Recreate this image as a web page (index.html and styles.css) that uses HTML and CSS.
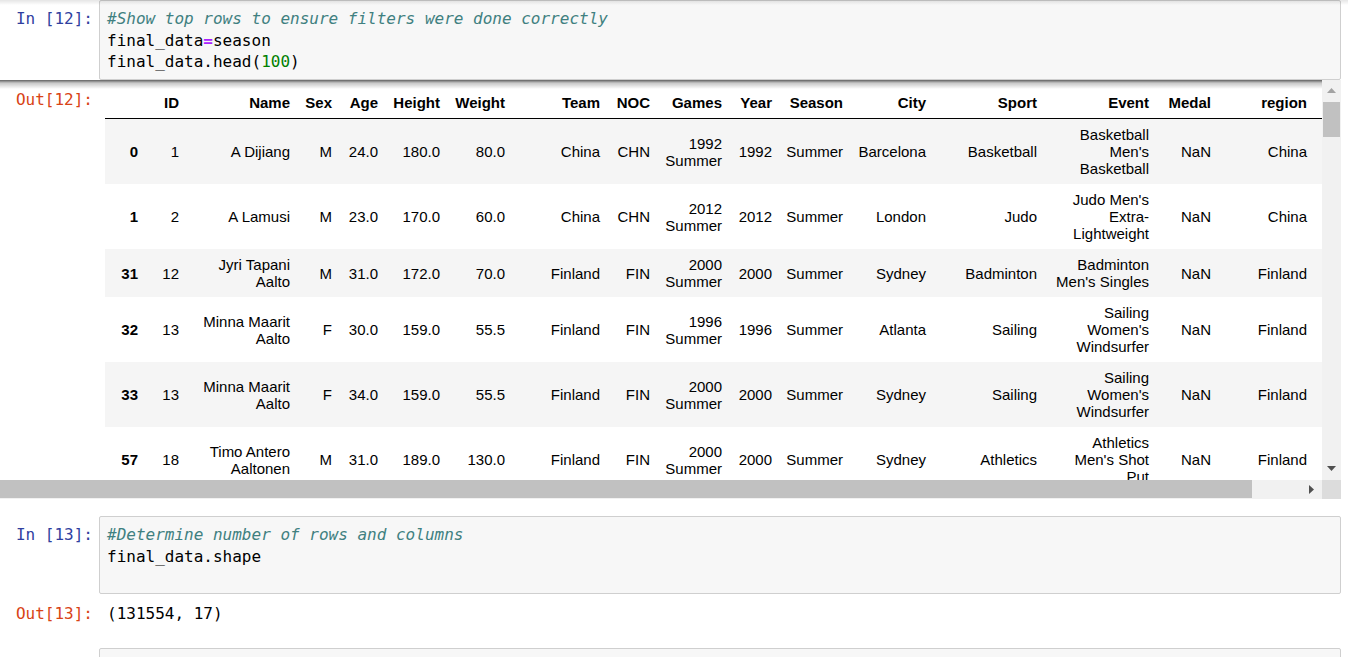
FILE: index.html
```html
<!DOCTYPE html>
<html>
<head>
<meta charset="utf-8">
<link rel="stylesheet" href="styles.css">
</head>
<body>
<div class="top-shade"></div>
<div class="notebook">
  <div class="cell">
    <div class="prompt in">In&nbsp;[12]:</div>
    <div class="input-box"><div class="ln"><span class="c">#Show top rows to ensure filters were done correctly</span></div><div class="ln">final_data<span class="o">=</span>season</div><div class="ln">final_data.head(<span class="m">100</span>)</div></div>
  </div>

  <div class="out-scroll">
    <div class="viewport">
      <div class="out-row">
        <div class="prompt out">Out[12]:</div>
        <div class="table-wrap">
          <table class="df">
            <colgroup>
              <col class="w40"><col class="w41"><col class="w111"><col class="w42"><col class="w46"><col class="w62"><col class="w65"><col class="w95"><col class="w50"><col class="w72"><col class="w50"><col class="w71"><col class="w83"><col class="w111"><col class="w112"><col class="w62"><col class="w96"><col class="w62">
            </colgroup>
            <thead>
              <tr><th></th><th>ID</th><th>Name</th><th>Sex</th><th>Age</th><th>Height</th><th>Weight</th><th>Team</th><th>NOC</th><th>Games</th><th>Year</th><th>Season</th><th>City</th><th>Sport</th><th>Event</th><th>Medal</th><th>region</th><th></th></tr>
            </thead>
            <tbody>
              <tr><th>0</th><td>1</td><td>A Dijiang</td><td>M</td><td>24.0</td><td>180.0</td><td>80.0</td><td>China</td><td>CHN</td><td>1992<br>Summer</td><td>1992</td><td>Summer</td><td>Barcelona</td><td>Basketball</td><td>Basketball<br>Men's<br>Basketball</td><td>NaN</td><td>China</td><td></td></tr>
              <tr><th>1</th><td>2</td><td>A Lamusi</td><td>M</td><td>23.0</td><td>170.0</td><td>60.0</td><td>China</td><td>CHN</td><td>2012<br>Summer</td><td>2012</td><td>Summer</td><td>London</td><td>Judo</td><td>Judo Men's<br>Extra-<br>Lightweight</td><td>NaN</td><td>China</td><td></td></tr>
              <tr><th>31</th><td>12</td><td>Jyri Tapani<br>Aalto</td><td>M</td><td>31.0</td><td>172.0</td><td>70.0</td><td>Finland</td><td>FIN</td><td>2000<br>Summer</td><td>2000</td><td>Summer</td><td>Sydney</td><td>Badminton</td><td>Badminton<br>Men's Singles</td><td>NaN</td><td>Finland</td><td></td></tr>
              <tr><th>32</th><td>13</td><td>Minna Maarit<br>Aalto</td><td>F</td><td>30.0</td><td>159.0</td><td>55.5</td><td>Finland</td><td>FIN</td><td>1996<br>Summer</td><td>1996</td><td>Summer</td><td>Atlanta</td><td>Sailing</td><td>Sailing<br>Women's<br>Windsurfer</td><td>NaN</td><td>Finland</td><td></td></tr>
              <tr><th>33</th><td>13</td><td>Minna Maarit<br>Aalto</td><td>F</td><td>34.0</td><td>159.0</td><td>55.5</td><td>Finland</td><td>FIN</td><td>2000<br>Summer</td><td>2000</td><td>Summer</td><td>Sydney</td><td>Sailing</td><td>Sailing<br>Women's<br>Windsurfer</td><td>NaN</td><td>Finland</td><td></td></tr>
              <tr><th>57</th><td>18</td><td>Timo Antero<br>Aaltonen</td><td>M</td><td>31.0</td><td>189.0</td><td>130.0</td><td>Finland</td><td>FIN</td><td>2000<br>Summer</td><td>2000</td><td>Summer</td><td>Sydney</td><td>Athletics</td><td>Athletics<br>Men's Shot<br>Put</td><td>NaN</td><td>Finland</td><td></td></tr>
            </tbody>
          </table>
        </div>
      </div>
    </div>
    <div class="vscroll">
      <div class="sb-btn"><svg width="9" height="5" viewBox="0 0 9 5"><polygon points="0,5 4.5,0 9,5" fill="#a3a3a3"/></svg></div>
      <div class="vthumb"></div>
      <div class="spacer"></div>
      <div class="sb-btn down"><svg width="9" height="5" viewBox="0 0 9 5"><polygon points="0,0 4.5,5 9,0" fill="#505050"/></svg></div>
    </div>
    <div class="hscroll">
      <div class="hthumb"></div>
      <div class="spacer"></div>
      <div class="sb-btn right"><svg width="5" height="9" viewBox="0 0 5 9"><polygon points="0,0 5,4.5 0,9" fill="#505050"/></svg></div>
    </div>
    <div class="corner"></div>
  </div>

  <div class="cell cell2">
    <div class="prompt in">In&nbsp;[13]:</div>
    <div class="input-box"><div class="ln"><span class="c">#Determine number of rows and columns</span></div><div class="ln">final_data.shape</div></div>
  </div>

  <div class="out-simple">
    <div class="prompt out">Out[13]:</div>
    <div class="out-text">(131554, 17)</div>
  </div>

  <div class="cell cell3">
    <div class="prompt in"></div>
    <div class="input-box"></div>
  </div>
</div>
</body>
</html>
```

FILE: styles.css
```css
html, body {
  margin: 0;
  padding: 0;
  background: #fff;
  overflow: hidden;
}

.top-shade {
  position: absolute;
  top: 0;
  left: 0;
  width: 1348px;
  height: 5px;
  background: linear-gradient(rgba(0, 0, 0, 0.1), rgba(0, 0, 0, 0));
  z-index: 5;
}

.notebook {
  width: 1341px;
}

.cell {
  display: flex;
}

.prompt {
  flex: none;
  width: 99px;
  box-sizing: border-box;
  padding-right: 6px;
  padding-top: 8px;
  text-align: right;
  font-family: "DejaVu Sans Mono", monospace;
  font-size: 16px;
  line-height: 21.5px;
  white-space: nowrap;
}

.prompt.in { color: #303f9f; }
.prompt.out { color: #d84315; }

.input-box {
  flex: 1;
  box-sizing: border-box;
  border: 1px solid #cfcfcf;
  border-radius: 2px;
  background: #f7f7f7;
  padding: 7px 7px 6px 7px;
  min-height: 80px;
  font-family: "DejaVu Sans Mono", monospace;
  font-size: 16px;
  line-height: 21.5px;
  color: #000;
}

.ln {
  white-space: pre;
  height: 21.5px;
}

.c { color: #408080; font-style: italic; }
.o { color: #aa22ff; font-weight: bold; }
.m { color: #008000; }

/* output scroll area */
.out-scroll {
  display: grid;
  grid-template-columns: 1322px 19px;
  grid-template-rows: 400px 19px;
}

.viewport {
  position: relative;
  overflow: hidden;
}

.viewport::after {
  content: "";
  position: absolute;
  top: 0;
  left: 0;
  right: 0;
  height: 9px;
  background: linear-gradient(rgba(0, 0, 0, 0.62), rgba(0, 0, 0, 0.22) 3px, rgba(0, 0, 0, 0));
}

.out-row {
  display: flex;
  padding-top: 7px;
  width: max-content;
}

.out-row .prompt {
  padding-top: 2px;
}

.table-wrap {
  padding-left: 6px;
}

.df {
  border-collapse: collapse;
  table-layout: fixed;
  width: 1271px;
  font-family: "Liberation Sans", Arial, sans-serif;
  font-size: 15px;
  line-height: 17px;
  color: #000;
}

.df th, .df td {
  padding: 7px;
  text-align: right;
  vertical-align: middle;
  white-space: nowrap;
  overflow: hidden;
}

.df thead th {
  border-bottom: 1px solid #000;
  font-weight: bold;
}

.df tbody th { font-weight: bold; }

.df tbody tr:nth-child(odd) { background: #f5f5f5; }

.w40 { width: 40px; }
.w41 { width: 41px; }
.w42 { width: 42px; }
.w46 { width: 46px; }
.w50 { width: 50px; }
.w62 { width: 62px; }
.w65 { width: 65px; }
.w71 { width: 71px; }
.w72 { width: 72px; }
.w83 { width: 83px; }
.w95 { width: 95px; }
.w96 { width: 96px; }
.w111 { width: 111px; }
.w112 { width: 112px; }

/* scrollbars */
.vscroll {
  background: #f1f1f1;
  display: flex;
  flex-direction: column;
}

.sb-btn {
  height: 20px;
  flex: none;
  display: flex;
  align-items: center;
  justify-content: center;
}

.sb-btn.down {
  margin-bottom: 2px;
}

.sb-btn.right {
  width: 20px;
  height: auto;
  margin-right: 1px;
}

.vthumb {
  flex: none;
  height: 35px;
  margin: 2px 1px 0 1px;
  background: #c1c1c1;
}

.spacer { flex: 1; }

.hscroll {
  background: #f1f1f1;
  display: flex;
}

.hthumb {
  flex: none;
  width: 1252px;
  margin: 0 0 1px 0;
  background: #c1c1c1;
}

.corner {
  background: #dcdcdc;
}

.cell2 {
  margin-top: 17px;
}

.cell2 .input-box {
  min-height: 78px;
}

.out-simple {
  display: flex;
  padding-top: 9px;
}

.out-simple .prompt {
  padding-top: 0;
}

.out-text {
  padding-left: 8px;
  font-family: "DejaVu Sans Mono", monospace;
  font-size: 16px;
  line-height: 21.5px;
  color: #000;
  white-space: pre;
}

.cell3 {
  margin-top: 23px;
}

.cell3 .input-box {
  min-height: 60px;
}
```
